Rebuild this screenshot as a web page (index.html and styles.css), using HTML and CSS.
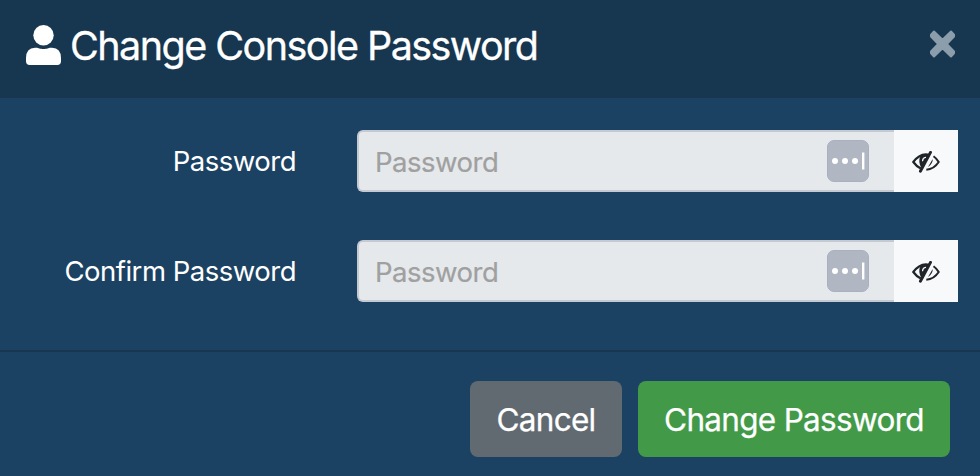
FILE: index.html
```html
<!DOCTYPE html>
<html lang="en">
<head>
<meta charset="utf-8">
<title>Change Console Password</title>
<link rel="stylesheet" href="styles.css">
</head>
<body>
<svg class="defs" width="0" height="0">
  <symbol id="eye-slash" viewBox="0 0 28 22">
    <path d="M16.8 3.7Q15.4 3.3 14 3.3Q6.6 3.5 1.3 11Q4.5 15.5 8.8 17.5" fill="none" stroke="#212529" stroke-width="2.2"/>
    <path d="M17.5 3.4 9.6 17.8Q5.5 10 8.7 4.7Q13 2 17.5 3.4Z" fill="#212529"/>
    <path d="M10.6 9.7Q10.8 6.7 13.6 6.3" fill="none" stroke="#f7f9fb" stroke-width="1.3" stroke-linecap="round"/>
    <path d="M18.5 1.4 8.4 20.2" fill="none" stroke="#212529" stroke-width="2.9" stroke-linecap="round"/>
    <path d="M21.5 5.2Q24.7 7.4 26.7 11Q22 18.2 14.3 18.7" fill="none" stroke="#212529" stroke-width="2"/>
    <path d="M20.7 8Q21 12.7 16 16Z" fill="#212529"/>
  </symbol>
</svg>
<form class="modal">
  <header class="modal-header">
    <svg class="user" viewBox="0 0 36 40"><circle cx="18" cy="10.2" r="10.2"/><path d="M9.5 22.8C13 22.2 13.6 24 18 24s5-1.8 8.5-1.2Q35.5 23.4 35.5 33v3.3Q35.5 40 31.8 40H4.2Q.5 40 .5 36.3V33Q.5 23.4 9.5 22.8Z"/></svg>
    <h1 class="title">Change Console Password</h1>
    <button class="close" type="button" aria-label="Close">
      <svg viewBox="0 0 27 28"><path d="M5 1.5 13.5 9.7 22 1.5 25 4.7V6.5L17.8 14 25 21.5V23.3L22 26.5 13.5 18.3 5 26.5 2 23.3V21.5L9.2 14 2 6.5V4.7Z"/></svg>
    </button>
  </header>
  <div class="modal-body">
    <div class="row">
      <label class="label" for="pw">Password</label>
      <div class="group">
        <input class="input" id="pw" type="password" placeholder="Password">
        <svg class="manager" viewBox="0 0 42 42"><rect x=".5" y=".5" width="41" height="41" rx="6.5"/><g fill="#fff"><circle cx="8" cy="21" r="3"/><circle cx="18" cy="21" r="3"/><circle cx="28" cy="21" r="3"/><path d="M35 12.5h2.4v17H35z"/></g></svg>
        <button class="reveal" type="button" aria-label="Show password"><svg><use href="#eye-slash"/></svg></button>
      </div>
    </div>
    <div class="row">
      <label class="label" for="pw2">Confirm Password</label>
      <div class="group">
        <input class="input" id="pw2" type="password" placeholder="Password">
        <svg class="manager" viewBox="0 0 42 42"><rect x=".5" y=".5" width="41" height="41" rx="6.5"/><g fill="#fff"><circle cx="8" cy="21" r="3"/><circle cx="18" cy="21" r="3"/><circle cx="28" cy="21" r="3"/><path d="M35 12.5h2.4v17H35z"/></g></svg>
        <button class="reveal" type="button" aria-label="Show password"><svg><use href="#eye-slash"/></svg></button>
      </div>
    </div>
  </div>
  <footer class="modal-footer">
    <button class="btn cancel" type="button">Cancel</button>
    <button class="btn submit" type="button">Change Password</button>
  </footer>
</form>
</body>
</html>
```
FILE: styles.css
```css
* { box-sizing: border-box; }
body { margin: 0; background: #1b4262; color: #fff; font-family: Inter, "Liberation Sans", sans-serif; overflow: hidden; }
button, input { font-family: inherit; border: 0; margin: 0; }
svg { display: block; }
.defs { position: absolute; }
.modal { width: 980px; height: 476px; display: flex; flex-direction: column; }
.modal-header { height: 98px; flex: none; display: flex; align-items: flex-start; padding: 25px 24px 0 25px; background: #17364f; }
.user { width: 37px; height: 40px; fill: #fff; }
.title { margin: -3px 0 0 8px; font-size: 39.5px; line-height: 48px; font-weight: 400; letter-spacing: -1.55px; white-space: nowrap; -webkit-text-stroke: .3px #fff; }
.close { margin: 5px 0 0 auto; padding: 0; background: none; }
.close svg { width: 27px; height: 28px; fill: #8c9dab; stroke: #8c9dab; stroke-width: 2; stroke-linejoin: round; }
.modal-body { height: 252px; flex: none; padding: 32px 22px 0 0; display: flex; flex-direction: column; gap: 48px; }
.row { display: flex; height: 62px; align-items: center; }
.label { width: 296px; text-align: right; font-size: 27.5px; line-height: 40px; letter-spacing: -.5px; }
.group { margin-left: 61px; width: 601px; height: 62px; display: flex; position: relative; }
.input { width: 537px; height: 62px; padding: 2px 90px 0 16px; background: #e5e9ec; border: 2px solid #c5cad2; border-right: 0; border-radius: 6px 0 0 6px; font-size: 27.5px; letter-spacing: -.5px; outline: 0; }
.input::placeholder { color: #a0a0a0; opacity: 1; -webkit-text-stroke: .2px #a0a0a0; }
.manager { position: absolute; left: 470px; top: 10px; width: 42px; height: 42px; }
.manager rect { fill: #b0b7c2; stroke: #a9b1be; }
.reveal { width: 64px; height: 62px; padding: 2px 0 0; background: #f7f9fb; display: flex; align-items: center; justify-content: center; }
.reveal svg { width: 28px; height: 22px; }
.modal-footer { flex: 1; border-top: 2px solid #17364f; padding: 29px 30px 0 0; display: flex; justify-content: flex-end; gap: 16px; }
.btn { height: 76px; padding: 1px 0 0; border-radius: 8px; color: #fff; font-size: 31.5px; line-height: 48px; letter-spacing: -.7px; white-space: nowrap; -webkit-text-stroke: .25px #fff; }
.cancel { width: 152px; background: #626a71; }
.submit { width: 312px; background: #429a48; }
```
